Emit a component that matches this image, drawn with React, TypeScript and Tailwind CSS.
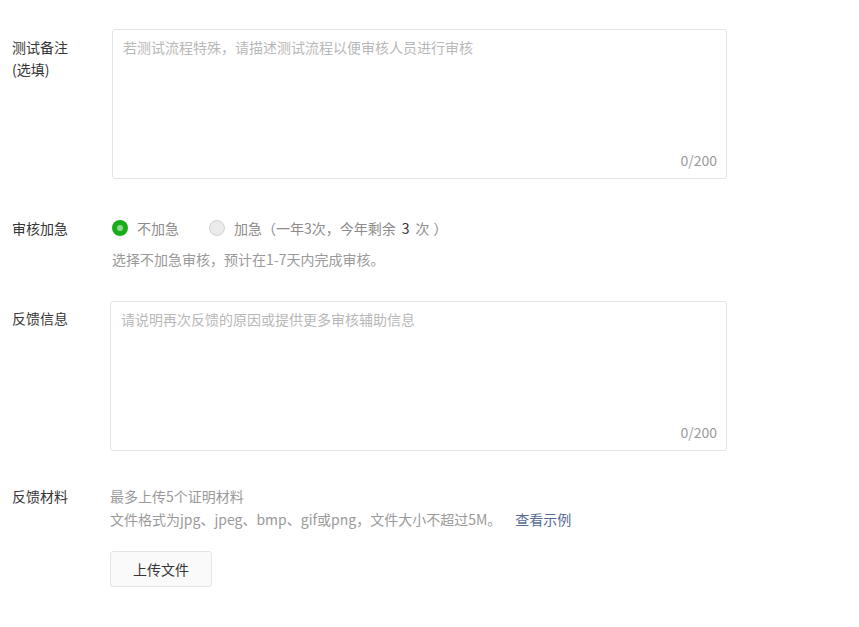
import React from "react";

const font = { fontFamily: '"Noto Sans CJK SC", "Noto Sans", sans-serif' };

function TextArea({ placeholder, className }: { placeholder: string; className: string }) {
  return (
    <div
      className={`relative h-[150px] rounded-[3px] border border-[#e4e4e4] bg-white ${className}`}
    >
      <div className="px-[10px] pt-[6px] text-[14px] leading-[22px] text-[#b8b8b8]">{placeholder}</div>
      <div className="absolute bottom-[7px] right-[9px] text-[14px] leading-[22px] text-[#9a9a9a]">0/200</div>
    </div>
  );
}

export default function App() {
  return (
    <div className="min-h-[627px] w-[859px] bg-white pt-[29px] text-[14px] leading-[22px] text-[#353535]" style={font}>
      {/* Row 1 */}
      <div className="flex">
        <div className="w-[112px] shrink-0 pl-[12px] pt-[7px]">
          <div>测试备注</div>
          <div>(选填)</div>
        </div>
        <TextArea className="w-[615px]" placeholder="若测试流程特殊，请描述测试流程以便审核人员进行审核" />
      </div>

      {/* Row 2 */}
      <div className="mt-[38px] flex">
        <div className="w-[112px] shrink-0 pl-[12px]">审核加急</div>
        <div>
          <div className="flex items-center">
            <span className="flex h-[16px] w-[16px] items-center justify-center rounded-full bg-[#1aad19]">
              <span className="h-[6px] w-[6px] rounded-full bg-[#8fd68e]" />
            </span>
            <span className="ml-[9px] text-[#8c8c8c]">不加急</span>
            <span className="ml-[30px] h-[16px] w-[16px] rounded-full border border-[#d2d2d2] bg-[#ebebeb]" />
            <span className="ml-[9px] text-[#8c8c8c]">
              加急（一年3次，今年剩余<span className="px-[6px] text-[#353535]">3</span>次<span className="pl-[4px]">）</span>
            </span>
          </div>
          <div className="mt-[9px] text-[#9a9a9a]">选择不加急审核，预计在1-7天内完成审核。</div>
        </div>
      </div>

      {/* Row 3 */}
      <div className="mt-[31px] flex">
        <div className="w-[110px] shrink-0 pl-[12px] pt-[6px]">反馈信息</div>
        <TextArea className="w-[617px]" placeholder="请说明再次反馈的原因或提供更多审核辅助信息" />
      </div>

      {/* Row 4 */}
      <div className="mt-[34px] flex">
        <div className="w-[110px] shrink-0 pl-[12px]">反馈材料</div>
        <div>
          <div className="leading-[23px] text-[#9a9a9a]">最多上传5个证明材料</div>
          <div className="leading-[23px] text-[#9a9a9a]">
            文件格式为jpg、jpeg、bmp、gif或png，文件大小不超过5M。
            <span className="ml-[14px] text-[#576b95]">查看示例</span>
          </div>
          <button className="mt-[20px] h-[36px] w-[102px] rounded-[3px] border border-[#e4e4e4] bg-[#fafafa] text-[14px] text-[#353535]">
            上传文件
          </button>
        </div>
      </div>
    </div>
  );
}
